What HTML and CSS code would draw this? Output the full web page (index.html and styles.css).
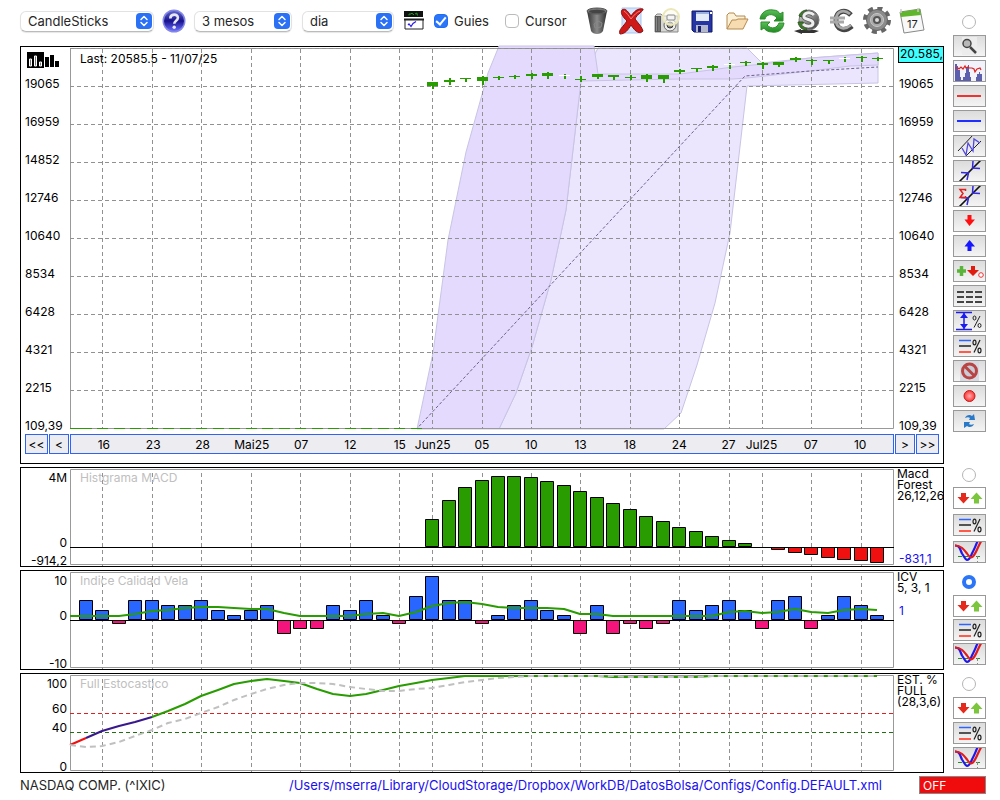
FILE: index.html
```html
<!DOCTYPE html>
<html lang="ca">
<head>
    <meta charset="UTF-8">
    <meta name="viewport" content="width=device-width, initial-scale=1.0">
    <title>NASDAQ COMP. (^IXIC)</title>
    <link rel="stylesheet" href="styles.css">
</head>
<body>
    <svg class="defs" width="0" height="0" aria-hidden="true">
        <defs>
            <linearGradient id="gBall" x1="0" y1="0" x2="0" y2="1"><stop offset="0" stop-color="#5f66c8"/><stop offset=".5" stop-color="#17118c"/><stop offset="1" stop-color="#6a6cff"/></linearGradient>
            <linearGradient id="gDark" x1="0" y1="0" x2="1" y2="0"><stop offset="0" stop-color="#333"/><stop offset=".5" stop-color="#8a8a8a"/><stop offset="1" stop-color="#2d2d2d"/></linearGradient>
            <linearGradient id="gSilver" x1="0" y1="0" x2="1" y2="1"><stop offset="0" stop-color="#ddd"/><stop offset=".5" stop-color="#8a8a8a"/><stop offset="1" stop-color="#333"/></linearGradient>
            <linearGradient id="gGreen" x1="0" y1="0" x2="0" y2="1"><stop offset="0" stop-color="#5cc05a"/><stop offset="1" stop-color="#1f8a22"/></linearGradient>
            <radialGradient id="gRed"><stop offset="0" stop-color="#ffb0b0"/><stop offset="1" stop-color="#ff3030"/></radialGradient>
        </defs>
        <symbol id="i-chevrons" viewBox="0 0 16 16">
            <rect width="16" height="16" rx="4" fill="#2b71f6"/>
            <path d="M5 6.500 8 3.500l3 3M5 9.500l3 3 3-3" fill="none" stroke="#fff" stroke-width="1.500" stroke-linecap="round" stroke-linejoin="round"/>
        </symbol>
        <symbol id="i-percent" viewBox="0 0 31 20">
            <path d="M5 4.500h12" stroke="#2f63ff" stroke-width="1.500"/>
            <path d="M5 10h12" stroke="#222" stroke-width="1.500"/>
            <path d="M5 16h12" stroke="#ff5a4a" stroke-width="2"/>
            <path d="M20 16.500 26 4" stroke="#222" stroke-width="1.200"/>
            <ellipse cx="20.500" cy="6.500" rx="1.500" ry="2.300" fill="none" stroke="#222" stroke-width="1.200"/>
            <ellipse cx="25.500" cy="14.500" rx="1.500" ry="2.300" fill="none" stroke="#222" stroke-width="1.200"/>
        </symbol>
        <symbol id="i-updown" viewBox="0 0 31 20">
            <path d="M7 5h5v4h3.500l-6 6.500L3.500 9H7z" fill="#e32a1c"/>
            <path d="M20 15.500h5V11h3.500l-6-6.500-6 6.500H20z" fill="#7cc63e"/>
        </symbol>
        <symbol id="i-cross" viewBox="0 0 31 20">
            <path d="M4 14.500h24" stroke="#2a8a2a" stroke-dasharray="4 2"/>
            <path d="M23.500 14v6" stroke="#888" stroke-dasharray="3 2"/>
            <path d="M1 3.500c5 0 5 4 7 8 2 3 3 6 5 6.500 3 0 4-5 6-8.500s3-7 4.500-10" fill="none" stroke="#2018e8" stroke-width="2.200"/>
            <path d="M1 3.500c6 0 9 4 12 8 2 3 4 5 6 3 3-3 4-8 8-15" fill="none" stroke="#e01c1c" stroke-width="2.200"/>
        </symbol>
        <symbol id="i-trend" viewBox="0 0 31 20">
            <path d="M5 21 27-1" stroke="#111" stroke-width="1.600"/>
            <path d="M7 11.500l7.500.500-1.500 7M19 0l-.5 7 7.500.500" fill="none" stroke="#3228e0" stroke-width="1.500"/>
        </symbol>
    </svg>

    <div class="app">
        <header class="toolbar">
            <span class="select-box select-style">
                <select aria-label="Tipus de gràfic"><option>CandleSticks</option><option>Línia</option></select>
                <svg width="16" height="16"><use href="#i-chevrons"/></svg>
            </span>
            <button class="icon-btn help" aria-label="Ajuda">
                <svg width="24" height="24" viewBox="0 0 24 24"><circle cx="12" cy="12" r="11.500" fill="#8286e6"/><circle cx="12" cy="12" r="10" fill="url(#gBall)"/><path d="M8.300 9.500c0-5 7.600-5 7.600-.7 0 3-3.600 3-3.600 6" fill="none" stroke="#e6e6f4" stroke-width="2.600"/><circle cx="12.200" cy="18.300" r="1.700" fill="#e6e6f4"/></svg>
            </button>
            <span class="select-box select-range">
                <select aria-label="Període"><option>3 mesos</option><option>6 mesos</option></select>
                <svg width="16" height="16"><use href="#i-chevrons"/></svg>
            </span>
            <span class="select-box select-step">
                <select aria-label="Interval"><option>dia</option><option>setmana</option></select>
                <svg width="16" height="16"><use href="#i-chevrons"/></svg>
            </span>
            <button class="icon-btn indicators" aria-label="Indicadors">
                <svg width="20" height="20" viewBox="0 0 20 20"><path d="M0 0h19v6H0z" fill="#111"/><path d="M5 4.500V3h2l1-1 1 1.500h1M11 3l2-1v2h1" fill="none" stroke="#1f9a1f"/><path d="M1 8.500h18v9.500H1z" fill="#fff" stroke="#222"/><path d="M0 8.500h20" stroke="#222" stroke-width="2"/><path d="M4 14l1-1 2 2.500 2-3 3-2" fill="none" stroke="#2a1cf0" stroke-width="1.200"/></svg>
            </button>
            <label class="check"><input type="checkbox" checked>Guies</label>
            <label class="check"><input type="checkbox">Cursor</label>

            <div class="actions">
                <button class="icon-btn" aria-label="Paperera">
                    <svg width="28" height="28" viewBox="0 0 28 28"><path d="M4 4l4 20c2 4 10 4 12 0l4-20z" fill="url(#gDark)"/><ellipse cx="14" cy="4" rx="10" ry="3" fill="#777" stroke="#555"/><ellipse cx="14" cy="4.500" rx="8" ry="1.800" fill="#444"/><path d="M11 17l4-3 4 2-1 4-6 1z" fill="none" stroke="#888"/></svg>
                </button>
                <button class="icon-btn" aria-label="Esborra">
                    <svg width="28" height="28" viewBox="0 0 28 28"><path d="M4 1h19v25H4z" fill="#d4e4fa" stroke="#a9c4ee"/><path d="M4 3c3-2 5 0 9 6 3-4 6-8 12-7 1 2-6 5-8 10 3 4 7 8 8 12-3 3-7 2-12-6-3 5-6 9-11 9-2-4 3-7 7-13C5 10 2 6 4 3z" fill="#cf1919" stroke="#8e0e0e"/><path d="M6 4c2 1 5 5 7 8 3-4 6-7 9-8" fill="none" stroke="#f08080"/></svg>
                </button>
                <button class="icon-btn" aria-label="Captura">
                    <svg width="28" height="28" viewBox="0 0 28 28"><path d="M2 9l2-2h4l2 2h15v16H2z" fill="#d6d6d4" stroke="#888"/><path d="M2 9h6v16H2z" fill="#5a5a5a"/><path d="M3.500 10v14M6 10v14" stroke="#8a8a8a"/><circle cx="17" cy="18" r="6" fill="#eee" stroke="#666"/><circle cx="17" cy="18" r="3" fill="#888" stroke="#333"/><circle cx="18" cy="10" r="8" fill="#fbfbf0" fill-opacity=".6" stroke="#eae8b8" stroke-width="2"/><rect x="14" y="8" width="8" height="5" rx="1" fill="#f5f5f5" stroke="#888"/></svg>
                </button>
                <button class="icon-btn" aria-label="Desa">
                    <svg width="28" height="28" viewBox="0 0 28 28"><path d="M4 4h20v21H6l-2-2z" fill="#2536a4" stroke="#10186a"/><path d="M8 5h13v9H8z" fill="#e4ecfa"/><path d="M8 5h13v2H8z" fill="#9bb1e0"/><path d="M22 5h2v2h-2z" fill="#fff"/><path d="M8 18h12v7H8z" fill="#b4b8cc"/><path d="M10 19h3v6h-3z" fill="#18206e"/></svg>
                </button>
                <button class="icon-btn" aria-label="Obre">
                    <svg width="28" height="28" viewBox="0 0 28 28"><path d="M4 22V8l2-2h5l2 3h9v5" fill="#fbf0d8" stroke="#b58a4e" stroke-linejoin="round"/><path d="M4 22l5-9h4l2-1h10l-5 10z" fill="#f6dcb0" stroke="#b58a4e" stroke-linejoin="round"/></svg>
                </button>
                <button class="icon-btn" aria-label="Actualitza">
                    <svg width="28" height="28" viewBox="0 0 28 28"><path d="M2 12C3 5 9 2 15 3c4 0 6 2 7 4l3-2v9h-9l3-3c-5-6-11-3-12 1z" fill="url(#gGreen)" stroke="#2c8d2a"/><path d="M26 16c-1 7-6 10-12 9-4 0-7-2-8-4l-3 2v-8h9l-3 3c5 5 10 3 12-2z" fill="url(#gGreen)" stroke="#2c8d2a"/></svg>
                </button>
                <button class="icon-btn" aria-label="Moneda">
                    <svg width="28" height="28" viewBox="0 0 28 28"><path d="M1 24l7-2v1h14l4 1-5 2H9v1z" fill="#333"/><circle cx="16" cy="13" r="10" fill="url(#gSilver)" stroke="#777"/><path d="M6 9c1-4 5-6 8-6l-1 3-4 4zM5 15l5 0 4 8c-5 0-8-3-9-8z" fill="#3f7a2a" stroke="#2c5520"/><path d="M21 8c-4-4-11-2-10 2 1 3 9 2 9 6 0 4-7 4-10 1" fill="none" stroke="#555" stroke-width="4.500"/><path d="M21 8c-4-4-11-2-10 2 1 3 9 2 9 6 0 4-7 4-10 1" fill="none" stroke="#eee" stroke-width="3"/></svg>
                </button>
                <button class="icon-btn" aria-label="Euro">
                    <svg width="28" height="28" viewBox="0 0 28 28"><path d="M23 8C16 1 8 5 8 13c0 9 8 13 16 6" fill="none" stroke="#444" stroke-width="5"/><path d="M22 7C15 1 8 5 8 13c0 8 8 11 15 5M2 11h15M2 15h14" fill="none" stroke="#a8a8a8" stroke-width="2.800"/></svg>
                </button>
                <button class="icon-btn" aria-label="Configuració">
                    <svg width="28" height="28" viewBox="0 0 28 28"><circle cx="14" cy="13" r="12" fill="none" stroke="#666" stroke-width="4" stroke-dasharray="5 4.420"/><circle cx="14" cy="13" r="10.500" fill="#8b8b8b" stroke="#666"/><circle cx="14" cy="13" r="6.500" fill="#a9a9a9" stroke="#c8c8c8"/><circle cx="14" cy="13" r="3" fill="#ddd" stroke="#555" stroke-width="2"/></svg>
                </button>
                <button class="icon-btn" aria-label="Calendari">
                    <svg width="28" height="28" viewBox="0 0 28 28"><path d="M2 5l20-3 4 21-20 3z" fill="#f8f8f8" stroke="#888"/><path d="M2 5l20-3 1 6L3 10z" fill="#5fb52c"/><path d="M3 2v4M20 1v4" stroke="#ccc" stroke-width="1.500"/><text x="9" y="21" class="cal-day">17</text></svg>
                </button>
            </div>
        </header>

        <aside class="tools tools-main">
            <div class="pick"><input type="radio" name="panel" aria-label="Gràfic principal"></div>
            <button class="tool" aria-label="Lupa"><svg viewBox="0 0 31 20"><path d="M8 1h15v18H8z" fill="#ececec"/><path d="M16 11l6 6" stroke="#444" stroke-width="2.500"/><circle cx="13" cy="7.500" r="4" fill="#b8b8b8" stroke="#444" stroke-width="1.500"/></svg></button>
            <button class="tool" aria-label="Volum"><svg viewBox="0 0 31 20"><path d="M0 0h31v20H0z" fill="#f2f2fa"/><path d="M1 20V3h2v2h1v4h2v7h1v3h2v-3h2v-4h1V6h2V4h1v7h1v5h1v4zM22 20v-4h1v-3h2v-2h1v2h2v7z" fill="#5c5fae"/><path d="M1 7h3l1 1 2-2 2 2 2-3 1 2 2-1 1 1h3l2 1 1 3 2-3 3-1 1 2" fill="none" stroke="#e02020" stroke-width="1.200"/></svg></button>
            <button class="tool" aria-label="Línia vermella"><svg viewBox="0 0 31 20"><path d="M3 10h24" stroke="#e33" stroke-width="2"/></svg></button>
            <button class="tool" aria-label="Línia blava"><svg viewBox="0 0 31 20"><path d="M3 10h24" stroke="#2230ff" stroke-width="2"/></svg></button>
            <button class="tool" aria-label="Canal"><svg viewBox="0 0 31 20"><path d="M4 15 19-1M12 20 27 5" stroke="#222"/><path d="M8 12l4 7 2-12 5 8 1-12 6 4" fill="none" stroke="#5048e0" stroke-width="1.300"/></svg></button>
            <button class="tool" aria-label="Tendència"><svg viewBox="0 0 31 20"><use href="#i-trend"/></svg></button>
            <button class="tool" aria-label="Regressió"><svg viewBox="0 0 31 20"><use href="#i-trend"/><path d="M11.500 5V3.500H6L9 7.500 6 11.500h5.500V10" fill="none" stroke="#e02020" stroke-width="1.500"/></svg></button>
            <button class="tool" aria-label="Venda"><svg viewBox="0 0 31 20"><path d="M13.500 4h4v4.500H21L15.500 15 10.500 8.500h3z" fill="#ff1010"/></svg></button>
            <button class="tool" aria-label="Compra"><svg viewBox="0 0 31 20"><path d="M13.500 15h4v-4.500H21L15.500 4l-5 6.500h3z" fill="#1616ff"/></svg></button>
            <button class="tool" aria-label="Senyals"><svg viewBox="0 0 31 20"><path d="M7.500 5v10M3 10h9" stroke="#5ab43a" stroke-width="3.500"/><path d="M17 5h4v4h4l-6 6-6-6h4z" fill="#e01c10"/><circle cx="27" cy="14" r="2.300" fill="#fff" stroke="#e33"/></svg></button>
            <button class="tool" aria-label="Traçat"><svg viewBox="0 0 31 20"><path d="M3 6h25M3 11h25M3 16h25" stroke="#444" stroke-width="2" stroke-dasharray="7 2"/></svg></button>
            <button class="tool" aria-label="Rang"><svg viewBox="0 0 31 20"><path d="M2 1.500h16M2 18.500h16M10 2v16" stroke="#1c1cf0" stroke-width="1.500"/><path d="M6 7l4-5 4 5zM6 13l4 5 4-5z" fill="#1c1cf0"/><path d="M20 16.500 26 5" stroke="#222"/><ellipse cx="20.500" cy="7" rx="1.500" ry="2" fill="none" stroke="#222"/><ellipse cx="25.500" cy="14.500" rx="1.500" ry="2" fill="none" stroke="#222"/></svg></button>
            <button class="tool" aria-label="Percentatges"><svg viewBox="0 0 31 20"><use href="#i-percent"/></svg></button>
            <button class="tool" aria-label="Prohibit"><svg viewBox="0 0 31 20"><path d="M6 0h19v20H6z" fill="#d8dae2"/><circle cx="15.500" cy="10" r="7" fill="#c9ccd6" stroke="#b84444" stroke-width="3"/><path d="M10.500 5l10 10" stroke="#b84444" stroke-width="3"/></svg></button>
            <button class="tool" aria-label="Enregistra"><svg viewBox="0 0 31 20"><circle cx="15.500" cy="10" r="5.500" fill="url(#gRed)" stroke="#c02020"/></svg></button>
            <button class="tool" aria-label="Recarrega"><svg viewBox="0 0 31 20"><path d="M11 7c1-3 5-4 7-2l2-2 1 6h-6l1-2c-1-1-3-1-5 0z" fill="#2a78c8"/><path d="M20 13c-1 3-5 4-7 2l-3 2V11h6l-1 2c1 1 3 1 5 0z" fill="#2a78c8"/></svg></button>
        </aside>

        <section class="panel panel-main">
            <div class="price-axis axis-left">
                <svg class="volume-icon" width="32" height="17" viewBox="0 0 32 17"><path d="M0 0h17v16H0z"/><path d="M2.500 7h2v7h-2zM7.500 4h2v10h-2zM12.500 10h2v4h-2z" fill="#777" stroke="#fff"/><path d="M18 5h4v10h-4zM23 3h4v12h-4zM28 9h4v6h-4z"/></svg>
                <span>19065</span><span>16959</span><span>14852</span><span>12746</span><span>10640</span>
                <span>8534</span><span>6428</span><span>4321</span><span>2215</span><span>109,39</span>
            </div>
            <div class="plot">
                <svg id="priceChart" viewBox="0 0 824 387" preserveAspectRatio="none"></svg>
                <p class="caption caption-price">Last: 20585.5 - 11/07/25</p>
            </div>
            <div class="price-axis axis-right">
                <strong class="last-price">20.585,5</strong>
                <span>19065</span><span>16959</span><span>14852</span><span>12746</span><span>10640</span>
                <span>8534</span><span>6428</span><span>4321</span><span>2215</span><span>109,39</span>
            </div>
            <div class="pager pager-back">
                <button class="page-far">&lt;&lt;</button><button class="page-near">&lt;</button>
            </div>
            <div class="dates" id="dates"></div>
            <div class="pager">
                <button class="page-near">&gt;</button><button class="page-far">&gt;&gt;</button>
            </div>
        </section>

        <section class="panel panel-macd">
            <div class="scale scale-macd"><span>4M</span><span>0</span><span>-914,2</span></div>
            <div class="plot">
                <svg id="macdChart" viewBox="0 0 824 98" preserveAspectRatio="none"></svg>
                <p class="caption">Histgrama MACD</p>
            </div>
            <div class="legend legend-macd"><p>Macd<br>Forest<br>26,12,26</p><p class="value">-831,1</p></div>
        </section>
        <aside class="tools tools-macd">
            <div class="pick"><input type="radio" name="panel" aria-label="MACD"></div>
            <button class="tool plain" aria-label="Senyals MACD"><svg viewBox="0 0 31 20"><use href="#i-updown"/></svg></button>
            <button class="tool" aria-label="Nivells MACD"><svg viewBox="0 0 31 20"><use href="#i-percent"/></svg></button>
            <button class="tool" aria-label="Encreuaments MACD"><svg viewBox="0 0 31 20"><use href="#i-cross"/></svg></button>
        </aside>

        <section class="panel">
            <div class="scale scale-icv"><span>10</span><span>0</span><span>-10</span></div>
            <div class="plot">
                <svg id="icvChart" viewBox="0 0 824 98" preserveAspectRatio="none"></svg>
                <p class="caption">Indice Calidad Vela</p>
            </div>
            <div class="legend"><p>ICV<br>5, 3, 1</p><p class="value">1</p></div>
        </section>
        <aside class="tools tools-icv">
            <div class="pick"><input type="radio" name="panel" aria-label="ICV" checked></div>
            <button class="tool plain" aria-label="Senyals ICV"><svg viewBox="0 0 31 20"><use href="#i-updown"/></svg></button>
            <button class="tool" aria-label="Nivells ICV"><svg viewBox="0 0 31 20"><use href="#i-percent"/></svg></button>
            <button class="tool" aria-label="Encreuaments ICV"><svg viewBox="0 0 31 20"><use href="#i-cross"/></svg></button>
        </aside>

        <section class="panel">
            <div class="scale scale-est"><span>100</span><span>60</span><span>40</span><span>0</span></div>
            <div class="plot">
                <svg id="estChart" viewBox="0 0 824 98" preserveAspectRatio="none"></svg>
                <p class="caption">Full Estocastico</p>
            </div>
            <div class="legend"><p>EST. %<br>FULL<br>(28,3,6)</p></div>
        </section>
        <aside class="tools">
            <div class="pick"><input type="radio" name="panel" aria-label="Estocastico"></div>
            <button class="tool plain" aria-label="Senyals estocàstic"><svg viewBox="0 0 31 20"><use href="#i-updown"/></svg></button>
            <button class="tool" aria-label="Nivells estocàstic"><svg viewBox="0 0 31 20"><use href="#i-percent"/></svg></button>
            <button class="tool" aria-label="Encreuaments estocàstic"><svg viewBox="0 0 31 20"><use href="#i-cross"/></svg></button>
        </aside>

        <footer class="status">
            <span>NASDAQ COMP. (^IXIC)</span>
            <a href="#">/Users/mserra/Library/CloudStorage/Dropbox/WorkDB/DatosBolsa/Configs/Config.DEFAULT.xml</a>
            <button class="off">OFF</button>
        </footer>
    </div>

    <script src="script.js"></script>
</body>
</html>
```
FILE: styles.css
```css
* {
    box-sizing: border-box;
}

body {
    margin: 0;
    background-color: #fff;
    color: #000;
    font-family: Inter, "Liberation Sans", sans-serif;
    font-size: 12px;
}

p {
    margin: 0;
}

button {
    padding: 0;
    font: inherit;
    color: inherit;
}

.defs {
    position: absolute;
}

.app {
    display: grid;
    grid-template-columns: minmax(0, 1fr) 33px;
    column-gap: 9px;
    padding: 0 14px 0 20px;
}

/* toolbar */
.toolbar {
    display: flex;
    align-items: center;
    height: 46px;
    padding: 0 18px 4px 0;
    font-size: 13px;
    color: #262626;
}

.select-box {
    display: grid;
    align-items: center;
}

.select-box select,
.select-box svg {
    grid-area: 1 / 1;
}

.select-box svg {
    justify-self: end;
    margin-right: 2px;
    pointer-events: none;
}

.select-box select {
    appearance: none;
    width: 100%;
    height: 21px;
    padding: 0 20px 0 7px;
    border: 1px solid #e2e2e2;
    border-bottom-color: #bbb;
    border-radius: 6px;
    background-color: #fff;
    box-shadow: 0 1px 1px rgba(0, 0, 0, 0.1);
    font: inherit;
    color: inherit;
}

.select-style {
    width: 134px;
}

.select-range {
    width: 98px;
    margin-right: 10px;
}

.select-step {
    width: 92px;
}

.icon-btn {
    display: flex;
    justify-content: center;
    border: none;
    background: none;
}

.help {
    width: 40px;
}

.indicators {
    width: 40px;
}

.check {
    display: flex;
    align-items: center;
    gap: 6px;
    margin-right: 16px;
}

.check input {
    appearance: none;
    display: grid;
    place-items: center;
    width: 14px;
    height: 14px;
    margin: 0;
    border: 1px solid #bbb;
    border-radius: 4px;
    background-color: #fff;
}

.check input:checked {
    border-color: #1f6cf5;
    background-color: #2b76f8;
}

.check input:checked::before {
    content: "";
    width: 4px;
    height: 8px;
    margin-bottom: 2px;
    border: solid #fff;
    border-width: 0 2px 2px 0;
    transform: rotate(40deg);
}

.actions {
    display: flex;
    gap: 7px;
    margin-left: auto;
}

.cal-day {
    font-size: 11px;
    fill: #222;
}

/* side buttons */
.tools {
    display: flex;
    flex-direction: column;
    gap: 3px;
    height: 103px;
    padding-bottom: 7px;
}

.tools-main {
    grid-column: 2;
    grid-row: 1 / 3;
    height: auto;
}

.tools-main .pick {
    flex: none;
    height: 32px;
    padding-top: 11px;
}

.tools-macd {
    gap: 5px;
}

.tools-icv {
    gap: 2px;
    padding-bottom: 8px;
}

.pick {
    display: flex;
    flex: 1;
    align-items: center;
    justify-content: center;
    padding-right: 2px;
}

.pick input {
    appearance: none;
    width: 14px;
    height: 14px;
    margin: 0;
    border: 1px solid #b5b5b5;
    border-radius: 50%;
    background-color: #fff;
}

.pick input:checked {
    border: 4px solid #2b76f8;
}

.tool {
    flex: none;
    width: 33px;
    height: 22px;
    border: 1px solid #999;
    background: linear-gradient(#dcdcdc, #f4f4f4);
}

.tool.plain {
    background: #fff;
}

.tool svg {
    display: block;
    width: 31px;
    height: 20px;
}

/* chart panels */
.panel {
    display: grid;
    grid-column: 1;
    grid-template-columns: 49px minmax(0, 1fr) 49px;
    height: 100px;
    margin-bottom: 3px;
    border: 1px solid #000;
}

.panel-main {
    grid-template-rows: 387px 20px;
    height: 418px;
}

.plot {
    position: relative;
}

.plot svg {
    display: block;
    width: 100%;
    height: 100%;
    overflow: visible;
}

.plot svg * {
    vector-effect: non-scaling-stroke;
}

.caption {
    position: absolute;
    top: 2px;
    left: 10px;
    line-height: 16px;
    color: #c0c0c0;
}

.caption-price {
    top: 4px;
    color: #000;
}

.price-axis {
    display: flex;
    flex-direction: column;
    gap: 22px;
    padding-left: 5px;
    overflow: hidden;
    line-height: 16px;
}

.axis-left {
    padding-left: 4px;
}

.volume-icon {
    flex: none;
    height: 17px;
    margin: 5px 0 -15px 2px;
}

.last-price {
    height: 17px;
    margin: -1px 0 -9px -1px;
    padding-left: 1px;
    border: 1px solid #000;
    border-width: 0 0 1px 1px;
    background-color: #40ffff;
    font-weight: 400;
}

.pager {
    display: flex;
    gap: 1px;
    padding-left: 1px;
}

.pager-back {
    padding-left: 4px;
}

.pager button,
.dates {
    border: 1px solid #2f63f0;
    background-color: #ececf1;
}

.page-far {
    width: 23px;
}

.page-near {
    width: 20px;
}

.dates {
    display: grid;
    grid-template-columns: repeat(50, minmax(0, 1fr));
    line-height: 20px;
}

.dates span {
    display: flex;
    justify-content: center;
    white-space: nowrap;
}

.scale {
    display: grid;
    margin-bottom: -2px;
    padding: 3px 3px 0 0;
    line-height: 14px;
    text-align: right;
}

.scale-macd {
    grid-template-rows: 1fr 18px 14px;
}

.scale-icv {
    grid-template-rows: 35px 1fr 14px;
}

.scale-est {
    grid-template-rows: 25px 19px 1fr 14px;
}

.legend {
    display: flex;
    flex-direction: column;
    gap: 12px;
    padding-left: 3px;
    overflow: hidden;
    line-height: 11px;
}

.legend-macd {
    justify-content: space-between;
    padding-bottom: 2px;
}

.value {
    padding-left: 2px;
    color: #1a10f0;
}

/* chart marks */
.frame {
    fill: none;
    stroke: #999;
}

.grid-line {
    stroke: #919191;
    stroke-dasharray: 4 3;
}

.zero {
    stroke: #000;
}

.cloud-light {
    fill: #ebe5fe;
    stroke: #c9c4e4;
}

.cloud-dark {
    fill: #e3dafd;
    stroke: #c9c4e4;
}

.middle {
    fill: none;
    stroke: #6c6088;
    stroke-dasharray: 3 2;
}

.up {
    fill: #289c00;
}

.down {
    fill: #fff;
}

.bar {
    stroke: #000;
}

.bar-green {
    fill: #289c00;
}

.bar-red {
    fill: #f01010;
}

.bar-blue {
    fill: #2866ff;
}

.bar-pink {
    fill: #f4147c;
}

.line {
    fill: none;
    stroke: #289c00;
    stroke-width: 2;
    stroke-linejoin: round;
}

.line-red {
    stroke: #f01010;
}

.line-violet {
    stroke: #38188c;
}

.line-gray {
    stroke: #c0c0c0;
    stroke-dasharray: 6 4;
}

.level-high {
    stroke: #e02020;
    stroke-dasharray: 4 3;
}

.level-low {
    stroke: #207010;
    stroke-dasharray: 4 3;
}

/* status line */
.status {
    display: flex;
    grid-column: 1 / 3;
    align-items: center;
    height: 18px;
    font-size: 13px;
    color: #262626;
}

.status a {
    margin: 0 37px 0 auto;
    color: #1a10f0;
    text-decoration: none;
}

.off {
    width: 67px;
    height: 18px;
    padding-left: 3px;
    border: 1px solid #888;
    background-color: #f00c0c;
    color: #fff;
    font-size: 12px;
    text-align: left;
}
```
FILE: script.js
```js
const STEP = 824 / 50;
const MARKS = [
    [2, '16'], [5, '23'], [8, '28'], [11, 'Mai25'], [14, '07'], [17, '12'], [20, '15'], [22, 'Jun25'],
    [25, '05'], [28, '10'], [31, '13'], [34, '18'], [37, '24'], [40, '27'], [42, 'Jul25'], [45, '07'], [48, '10']
];

// [body top, body bottom, wick top, wick bottom, hollow]
const candles = [
    [35, 39, 35, 42], [33, 35, 31, 38], [31, 32, 31, 35], [30, 34, 29, 38], [30, 31, 29, 33], [29, 30, 28, 32],
    [27, 29, 26, 32], [26, 29, 25, 32], [28, 29, 27, 32, 1], [32, 33, 29, 35], [27, 30, 27, 32], [28, 30, 28, 33],
    [30, 31, 28, 33], [28, 32, 27, 35], [28, 32, 28, 36], [23, 25, 22, 27], [21, 22, 21, 25], [19, 21, 18, 24],
    [17, 18, 16, 22, 1], [15, 16, 14, 19], [16, 18, 15, 22], [15, 18, 15, 20], [11, 13, 10, 15], [13, 14, 12, 18],
    [13, 14, 13, 17], [11, 12, 10, 15, 1], [10, 11, 9, 15], [11, 12, 10, 14]
];

const macd = [28, 47, 60, 67, 71, 71, 70, 66, 62, 56, 50, 44, 38, 31, 26, 20, 16, 11, 7, 4, 0, -2, -5, -7, -10, -12, -13, -15];

const icv = [20, 10, -3, 20, 20, 15, 15, 20, 10, 5, 10, 15, -13, -8, -8, 15, 10, 20, 5, -3, 24, 44, 20, 20, -3,
    5, 15, 20, 10, 5, -13, 15, -13, -3, -8, -3, 20, 10, 15, 20, 10, -8, 20, 24, -8, 5, 24, 15, 5];

const icvLine = [45, 45, 45, 45, 43, 40, 39, 37, 36, 36, 37, 38, 38, 42, 45, 45, 45, 45, 43, 42, 45, 41, 35, 32, 31,
    33, 36, 37, 37, 37, 38, 43, 43, 45, 45, 45, 45, 45, 45, 45, 41, 40, 42, 41, 38, 41, 42, 39, 38, 39];

const fast = [71, 64, 57, 52, 48, 43, 37, 30, 22, 16, 10, 7, 5, 7, 9, 15, 20, 22, 20, 16, 12, 9, 6, 4, 2,
    2, 2, 2, 2, 2, 2, 2, 2, 3, 3, 3, 3, 3, 3, 2, 2, 2, 2, 2, 2, 2, 2, 2, 2, 2];
const slow = [71, 73, 72, 68, 62, 56, 49, 45, 39, 33, 26, 20, 15, 11, 9, 9, 10, 13, 15, 17, 17, 15, 14, 11, 8,
    6, 4, 3, 2, 2, 2, 2, 2, 2, 3, 3, 3, 3, 3, 2, 2, 2, 2, 2, 2, 2, 2, 2, 2, 2];

const xAt = slot => Math.round(slot * STEP - 0.5);

function line(x1, y1, x2, y2, cls) {
    return `<line x1="${x1}" y1="${y1}" x2="${x2}" y2="${y2}" class="${cls}"/>`;
}

function rect(x, y, w, h, cls) {
    return `<rect x="${x}" y="${y}" width="${w}" height="${h}" class="${cls}"/>`;
}

function polyline(values, from, to, cls) {
    const points = values.slice(from, to + 1).map((y, i) => `${xAt(from + i)},${y}`).join(' ');
    return `<polyline points="${points}" class="line ${cls}"/>`;
}

function verticals(top, bottom) {
    return MARKS.map(([slot]) => line(xAt(slot) + 0.5, top, xAt(slot) + 0.5, bottom, 'grid-line')).join('');
}

function bars(values, firstSlot, zero, positive, negative) {
    return values.map((v, i) => {
        if (!v) return '';
        const x = xAt(firstSlot + i) - 6.5;
        return v > 0
            ? rect(x, zero - v + 0.5, 13, v - 1, `bar ${positive}`)
            : rect(x, zero + 0.5, 13, -v, `bar ${negative}`);
    }).join('');
}

function drawPrice() {
    let out = '';
    out += '<polygon class="cloud-light" points="429,382 446,346 462,300 481,233 496,163 511,34 528,1 677,1 692,16 740,11 808,6 808,36 677,39 660,186 645,256 627,318 611,366 594,382"/>';
    out += '<polygon class="cloud-dark" points="347,382 363,306 378,193 396,105 418,26 429,-1 524,-1 528,27 610,27 663,20 693,17 740,11 808,6 808,18 780,19 740,24 677,31 663,32 610,32 511,34 496,163 481,233 462,300 446,346 429,382"/>';
    out += '<polyline class="middle" points="0,381.500 347,381.500 675,29 740,24 808,20"/>';
    out += rect(0.5, 1.5, 823, 380, 'frame');
    for (let i = 0; i < 10; i++) {
        out += line(0, i * 38 + 1.5, 824, i * 38 + 1.5, 'grid-line');
    }
    out += verticals(2, 382);
    for (let slot = 0; slot < 22; slot++) {
        out += rect(Math.max(0, xAt(slot) - 5), 381, 11, 1, 'up');
    }
    candles.forEach(([top, bottom, high, low, hollow], i) => {
        const x = xAt(22 + i);
        out += rect(x, high, 2, low - high, 'up');
        out += rect(x - 5, top, 11, bottom - top, hollow ? 'down' : 'up');
    });
    document.getElementById('priceChart').innerHTML = out;
}

function drawSmall(id, content) {
    document.getElementById(id).innerHTML = rect(0.5, 1.5, 823, 95, 'frame') + verticals(5, 98) + content;
}

document.getElementById('dates').innerHTML = MARKS
    .map(([slot, text]) => `<span style="grid-column: ${slot} / span 2; grid-row: 1">${text}</span>`)
    .join('');

drawPrice();
drawSmall('macdChart', bars(macd, 22, 79, 'bar-green', 'bar-red') + line(0, 79.5, 824, 79.5, 'zero'));
drawSmall('icvChart', bars(icv, 1, 49, 'bar-blue', 'bar-pink') + line(0, 49.5, 824, 49.5, 'zero') + polyline(icvLine, 0, 49, ''));
drawSmall('estChart',
    line(0, 39.5, 824, 39.5, 'level-high') +
    line(0, 58.5, 824, 58.5, 'level-low') +
    polyline(fast, 0, 1, 'line-red') +
    polyline(fast, 1, 5, 'line-violet') +
    polyline(fast, 5, 49, '') +
    polyline(slow, 0, 49, 'line-gray'));
```
